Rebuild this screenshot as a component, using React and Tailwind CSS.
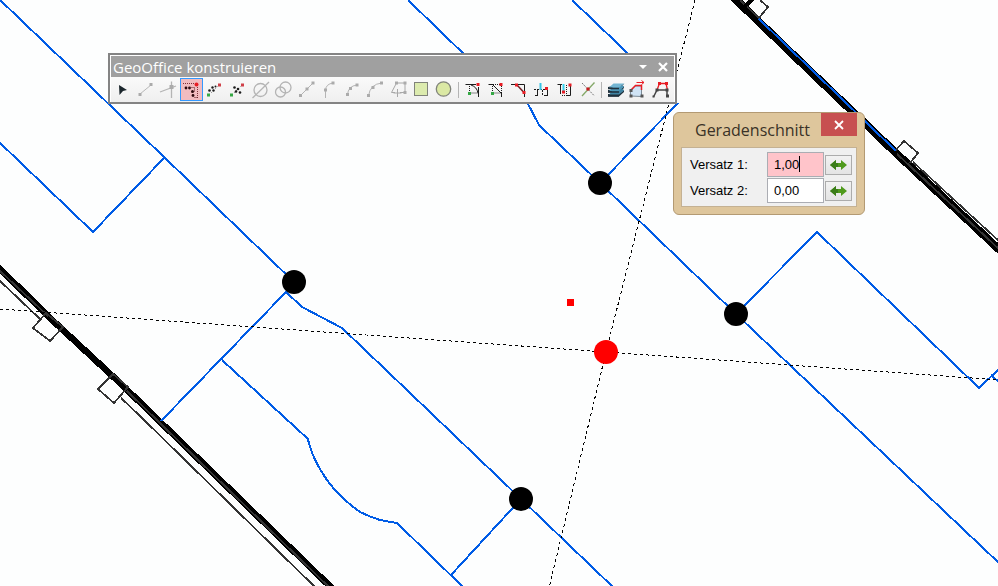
// App.jsx
import React, { useState } from 'react';

const Node = ({ x, y, fill = '#ababab', size = 3 }) => (
  <rect x={x - size / 2} y={y - size / 2} width={size} height={size} fill={fill} />
);

const RED = '#e81c24';
const GREEN = '#35a845';
const DARK = '#1c1c1c';

const mainTools = [
  { name: 'Auswählen', icon: <path d="M8 7L16 12L12 13L8.500 17z" fill="#1b262c" /> },
  {
    name: 'Linie',
    icon: (
      <g>
        <path d="M6 16L17 7" stroke="#b8b8b8" fill="none" />
        <Node x={6} y={16.5} />
        <Node x={17} y={6.5} />
      </g>
    ),
  },
  {
    name: 'Lot',
    icon: (
      <g>
        <path d="M3 14L19 8M14.5 3.5V20" stroke="#b4b4b4" strokeWidth="1.3" fill="none" />
        <Node x={14.5} y={9} size={4} />
      </g>
    ),
  },
  {
    name: 'Geradenschnitt',
    active: true,
    icon: (
      <g>
        <path d="M3 5.5h12M17.5 9v11" stroke="#7d3038" strokeDasharray="1 1" fill="none" />
        <path d="M11.500 9.500h3v4M14.500 19.500h3" stroke="#5c2026" strokeDasharray="1 1" fill="none" />
        <circle cx="6" cy="10" r="1.4" fill="#2c0a0e" />
        <circle cx="9.5" cy="10" r="1.4" fill="#2c0a0e" />
        <circle cx="12.500" cy="13.500" r="1.5" fill="#2c0a0e" />
        <circle cx="13" cy="17.500" r="1.4" fill="#2c0a0e" />
        <circle cx="16.500" cy="6.500" r="2" fill={RED} />
      </g>
    ),
  },
  {
    name: 'Bogenschnitt',
    icon: (
      <g>
        <path d="M6 17L16 7" stroke="#777" strokeDasharray="1 2" fill="none" />
        <circle cx="6.500" cy="12.500" r="1.3" fill={DARK} />
        <circle cx="9.500" cy="9.500" r="1.2" fill={DARK} />
        <circle cx="10.500" cy="12.500" r="1.2" fill={DARK} />
        <circle cx="12.500" cy="8.500" r="1" fill={DARK} />
        <Node x={16.500} y={7} fill="#d04048" />
        <Node x={5.5} y={17} fill={GREEN} />
      </g>
    ),
  },
  {
    name: 'Punkte auf Linie',
    icon: (
      <g>
        <path d="M6 17L16 7" stroke="#777" strokeDasharray="1 2" fill="none" />
        <circle cx="8.500" cy="9.500" r="1.3" fill={DARK} />
        <circle cx="12" cy="11" r="1.3" fill={DARK} />
        <circle cx="10" cy="13.500" r="1.3" fill={DARK} />
        <circle cx="14" cy="14.500" r="1.3" fill={DARK} />
        <Node x={16.500} y={7} fill="#d04048" />
        <Node x={5.5} y={17} fill={GREEN} />
      </g>
    ),
  },
  {
    name: 'Kreis und Gerade',
    icon: (
      <g stroke="#b4b4b4" strokeWidth="1.3" fill="none">
        <circle cx="11.500" cy="12" r="6.500" />
        <path d="M3.500 20L20 4" />
      </g>
    ),
  },
  {
    name: 'Kreis und Kreis',
    icon: (
      <g stroke="#b4b4b4" strokeWidth="1.3" fill="none">
        <circle cx="13.500" cy="9.500" r="5.500" />
        <circle cx="8.500" cy="14" r="5" />
      </g>
    ),
  },
  {
    name: 'Mittelpunkt',
    icon: (
      <g>
        <path d="M5.500 17.500L18 5" stroke="#b4b4b4" fill="none" />
        <Node x={5.5} y={17.5} />
        <Node x={12} y={11} />
        <Node x={18} y={5} />
      </g>
    ),
  },
  {
    name: 'Tangentenbogen',
    icon: (
      <g>
        <path d="M7.500 20V12Q8 6 15 5" stroke="#b4b4b4" fill="none" />
        <Node x={7.500} y={12} />
        <Node x={15} y={5} />
      </g>
    ),
  },
  {
    name: 'Kleiner Bogen',
    icon: (
      <g>
        <path d="M6.500 17Q7 8 16 7" stroke="#b4b4b4" fill="none" />
        <Node x={6.5} y={16.5} />
        <Node x={9.5} y={10.5} />
        <Node x={16} y={7} />
      </g>
    ),
  },
  {
    name: 'Bogen',
    icon: (
      <g>
        <path d="M4.500 18Q6 6 18 5" stroke="#b4b4b4" fill="none" />
        <Node x={4.5} y={17.5} />
        <Node x={9} y={9.500} />
        <Node x={17.5} y={5} />
      </g>
    ),
  },
  {
    name: 'Polygon',
    icon: (
      <g>
        <path d="M8 14.500H4.500L9.500 5H18V14.500H13M10.500 11v8M6.500 15h8" stroke="#a8a8a8" fill="none" />
        <Node x={9.5} y={5} />
        <Node x={18} y={5} />
        <Node x={18} y={14.5} />
      </g>
    ),
  },
  {
    name: 'Rechteck',
    icon: <rect x="4.5" y="4.5" width="13" height="13" fill="#dcebae" stroke="#80837a" />,
  },
  {
    name: 'Kreis',
    icon: <circle cx="10.5" cy="11" r="7.2" fill="#dbe9a4" stroke="#80837a" strokeWidth="1.300" />,
  },
];

const editTools = [
  {
    name: 'Ausrunden',
    icon: (
      <g>
        <path d="M4.500 6.500H15M17.500 9v10M10 7Q16 9 17 15" stroke={DARK} fill="none" />
        <path d="M8.500 8v7H17" stroke={DARK} strokeDasharray="1 1" fill="none" />
        <Node x={17} y={6.500} fill={RED} />
        <Node x={8.5} y={15.500} fill={GREEN} />
      </g>
    ),
  },
  {
    name: 'Abschrägen',
    icon: (
      <g>
        <path d="M4.500 6.500H9M17.500 14v5M9 7L17 15" stroke={DARK} fill="none" />
        <path d="M9 6.500h7M8.500 8v7H17M17.500 8v6" stroke={DARK} strokeDasharray="1 1" fill="none" />
        <Node x={17} y={6.500} fill={RED} />
        <Node x={8.5} y={15.500} fill={GREEN} />
      </g>
    ),
  },
  {
    name: 'Fase',
    icon: (
      <g>
        <path d="M4 6.500H17.500V19" stroke={DARK} fill="none" />
        <path d="M10 7L17 14.500" stroke="#6e2024" strokeWidth="1.5" fill="none" />
        <Node x={9.500} y={7} fill={RED} />
        <Node x={17} y={14.500} fill={RED} />
      </g>
    ),
  },
  {
    name: 'Teilen',
    icon: (
      <g>
        <path d="M7.500 12v5M17.500 12v5M5 17.500h3M14 17.500h4" stroke={DARK} fill="none" />
        <path d="M4 11.500h11M12.500 12v5" stroke={DARK} strokeDasharray="2 1" fill="none" />
        <path d="M10.500 5v7" stroke="#35c3e6" strokeWidth="2" fill="none" />
        <Node x={16.500} y={10.500} fill={RED} />
      </g>
    ),
  },
  {
    name: 'Verlängern',
    icon: (
      <g>
        <path d="M4.500 6.500H9M7.500 7v9M14 17.500h3.500V8" stroke={DARK} fill="none" />
        <path d="M9 17.500h5M13.500 7v9" stroke={DARK} strokeDasharray="1 1" fill="none" />
        <path d="M10.500 6v7" stroke="#35d3f0" strokeWidth="2" fill="none" />
        <Node x={10.500} y={14} fill={RED} />
        <Node x={17} y={7} fill={RED} />
      </g>
    ),
  },
  {
    name: 'Schnittpunkt',
    icon: (
      <g>
        <path d="M6 18L18.500 4.500" stroke="#84a868" strokeWidth="1.3" fill="none" />
        <path d="M6 5L18 17.500" stroke="#777" strokeDasharray="2 1" fill="none" />
        <circle cx="12" cy="11" r="1.800" fill="#c41c20" />
      </g>
    ),
  },
];

const layerTools = [
  {
    name: 'Ebenen',
    icon: (
      <g>
        <path d="M4 16h11l5-4v2l-5 4.500H4zM4 12h11l5-4v2l-5 4.500H4zM4 9l5-1 11-2-5 5H4z" fill="#20313c" />
        <path d="M5 16.500h10l5-4-1-1.500L9 12z" fill="#3f83a2" />
        <path d="M5 13h10l5-4-1-1.500L9 9z" fill="#4c96b6" />
        <path d="M5 9.500h10l5.500-4H9.500z" fill="#73b5d2" />
        <path d="M4 10.500h11M4 14h11M4 18h11" stroke="#20313c" strokeWidth="1.300" fill="none" />
      </g>
    ),
  },
  {
    name: 'Fläche verschieben',
    icon: (
      <g>
        <path d="M3.500 18V13L8 8H14.500V18.500Z" fill="#cfe3f5" stroke="#7b8a96" />
        <path d="M3.500 12.500L8.500 7.500H14.500V12" fill="none" stroke={RED} strokeWidth="1.500" />
        <path d="M9.500 4.500H17M14.500 2.500L17 4.500L14.500 6.500" fill="none" stroke={RED} />
        <Node x={4} y={18} fill="#555" />
        <Node x={4} y={12.500} fill="#555" />
        <Node x={15} y={18} fill="#555" />
      </g>
    ),
  },
  {
    name: 'Umformen',
    icon: (
      <g>
        <path d="M3.500 19L7 12H17V18" fill="none" stroke="#444" strokeWidth="1.500" />
        <path d="M7 12L9.500 5.500H16L17.500 12" fill="none" stroke={RED} strokeWidth="1.300" />
        <Node x={9.5} y={5.500} fill={RED} />
        <Node x={16.500} y={5.500} fill={RED} />
        <Node x={7} y={12} fill="#444" />
        <Node x={17} y={12} fill="#444" />
        <Node x={17.500} y={18} fill="#444" />
        <Node x={3.5} y={18.500} fill="#444" size={2} />
      </g>
    ),
  },
];

const Separator = () => (
  <div className="w-[5px] flex justify-center items-center">
    <div className="w-px h-4 bg-[#b4b4b4]" />
  </div>
);

const ToolGroup = ({ tools }) => (
  <div className="flex">
    {tools.map((tool) => (
      <button
        key={tool.name}
        type="button"
        aria-label={tool.name}
        className={`w-[23px] h-[23px] ${
          tool.active ? 'bg-[#f1bcc0] outline outline-1 -outline-offset-1 outline-[#3399ff]' : ''
        }`}
      >
        <svg viewBox="0 0 23 23" className="w-[23px] h-[23px]" aria-hidden="true">
          {tool.icon}
        </svg>
      </button>
    ))}
  </div>
);

const Toolbar = () => (
  <section className="absolute left-[108px] top-[53px] border-2 border-[#848484] bg-white p-px pb-0">
    <header className="flex items-center h-[21px] bg-[#a0a0a0] pl-[2px] pr-px">
      <h1 className="flex-1 font-['Open_Sans',sans-serif] text-[15px] leading-5 text-white whitespace-nowrap">
        GeoOffice konstruieren
      </h1>
      <button type="button" aria-label="Optionen" className="w-5 h-5 flex items-center justify-center">
        <svg viewBox="0 0 8 4" className="w-2 h-1" aria-hidden="true">
          <path d="M0 0h8L4 4z" fill="#fff" />
        </svg>
      </button>
      <button type="button" aria-label="Schließen" className="w-5 h-5 flex items-center justify-center">
        <svg viewBox="0 0 10 10" className="w-[10px] h-[10px]" aria-hidden="true">
          <path d="M1 1l8 8M9 1l-8 8" stroke="#fff" strokeWidth="2.200" />
        </svg>
      </button>
    </header>
    <div className="flex bg-linear-to-b from-[#fafafa] to-[#efefef] pt-px pb-px pr-px">
      <ToolGroup tools={mainTools} />
      <Separator />
      <ToolGroup tools={editTools} />
      <Separator />
      <ToolGroup tools={layerTools} />
    </div>
  </section>
);

const OffsetRow = ({ id, label, value, onChange, active }) => (
  <div className="flex items-center">
    <label htmlFor={id} className="w-[77px] text-[13px] leading-4 text-black">
      {label}
    </label>
    <div className="relative">
      <input
        id={id}
        type="text"
        value={value}
        onChange={(e) => onChange(e.target.value)}
        className={`block w-[57px] h-[25px] border border-[#abadb3] pl-[6px] text-[13px] leading-4 text-black outline-none ${
          active ? 'bg-[#ffc4ca]' : 'bg-white'
        }`}
      />
      {active && <span className="absolute left-8 top-1 w-px h-4 bg-black" />}
    </div>
    <button
      type="button"
      aria-label={`${label} umkehren`}
      className="ml-px w-[27px] h-5 border border-[#acacac] bg-linear-to-b from-[#f2f2f2] to-[#e4e4e4] flex items-center justify-center"
    >
      <svg viewBox="0 0 17 10" className="w-[17px] h-[10px]" aria-hidden="true">
        <path d="M0 5L6 0V3H11V0L17 5L11 10V7H6V10Z" fill="#4f9a1c" />
        <path d="M0 5L6 0V3H8V7H6V10Z" fill="#3b7d18" />
      </svg>
    </button>
  </div>
);

const IntersectionDialog = () => {
  const [offset1, setOffset1] = useState('1,00');
  const [offset2, setOffset2] = useState('0,00');

  return (
    <section className="absolute left-[673px] top-[112px] w-48 rounded-md border border-[#b39a73] bg-[#dec69c] px-[7px] pb-[7px]">
      <header className="flex items-start h-[34px]">
        <h2 className="flex-1 pl-[14px] pt-[7px] font-['Open_Sans',sans-serif] text-base leading-5 text-[#3a3227] whitespace-nowrap">
          Geradenschnitt
        </h2>
        <button
          type="button"
          aria-label="Dialog schließen"
          className="w-9 h-[23px] bg-[#c75050] flex items-center justify-center shrink-0"
        >
          <svg viewBox="0 0 10 10" className="w-[10px] h-[10px]" aria-hidden="true">
            <path d="M1 1l8 8M9 1l-8 8" stroke="#fff" strokeWidth="1.800" />
          </svg>
        </button>
      </header>
      <div className="flex flex-col gap-px border border-[#c4b193] bg-[#f0f0f0] pt-1 pb-[3px] pl-2 font-['Liberation_Sans',sans-serif]">
        <OffsetRow id="offset1" label="Versatz 1:" value={offset1} onChange={setOffset1} active />
        <OffsetRow id="offset2" label="Versatz 2:" value={offset2} onChange={setOffset2} />
      </div>
    </section>
  );
};

const junctions = [
  [600, 183],
  [294, 282],
  [736, 314],
  [521, 499],
];

const MapCanvas = () => (
  <svg className="absolute inset-0 w-full h-full" aria-hidden="true" fill="none" shapeRendering="crispEdges">
    {/* road edges */}
    <g stroke="#000">
      <path d="M-6 263L50 318L120 383L338 594" strokeWidth="6.500" />
      <path d="M730 -6L810 71L897 154L1004 254" strokeWidth="8" />
    </g>
    <g stroke="#343434" strokeWidth="1.800">
      <path d="M0 271L48 316M127 391L332 590" />
      <path d="M897 154L1000 250M740 0L759 18" />
      <path d="M0 281L40 319M121 398L140 416L277 550L316 588" />
      <path d="M913 162L1000 242" />
      <path d="M50 341L33 328L46 313L63 327Z" />
      <path d="M114 403L98 389L113 374L128 387Z" />
      <path d="M895 151L904 141L918 153L910 163" />
      <path d="M760 0L768 7L759 18" />
    </g>
    <path d="M745 6L754 -2" stroke="#000" strokeWidth="4" />

    {/* parcel boundaries */}
    <g stroke="#005ce6" strokeWidth="2">
      <path d="M-2 -2L164 157L294 282" />
      <path d="M-2 141L93 232L164 158" />
      <path d="M161 421L286 292L302 307L342 328L521 499L614 588" />
      <path d="M222 360L308 439Q309 445 313 455Q318 467 327 480Q334 490 342 497Q350 505 360 512Q370 517 380 520Q390 522 397 523L464 588" />
      <path d="M521 499L451 575" />
      <path d="M408 0L470 60M572 0L640 65M678 103L600 183" />
      <path d="M527 102L539 125L600 183L736 314L1000 564" />
      <path d="M736 314L817 232L979 388L1000 368M991 375L1000 383" />
      <path d="M759 19L896 151" />
    </g>

    {/* construction lines */}
    <g stroke="#000" strokeDasharray="3 3">
      <path d="M0 309L606 352L1000 380" />
      <path d="M695 0L606 352L549 588" />
    </g>

    <g shapeRendering="auto">
      {junctions.map(([x, y]) => (
        <circle key={`${x}-${y}`} cx={x} cy={y} r="12" fill="#000" />
      ))}
      <circle cx="606" cy="352" r="12" fill="#f00" />
    </g>
    <rect x="567" y="299" width="7" height="7" fill="#f00" />
  </svg>
);

const App = () => {
  return (
    <main className="relative min-h-screen overflow-hidden bg-[#fdfefe]">
      <MapCanvas />
      <Toolbar />
      <IntersectionDialog />
    </main>
  );
};

export default App;
